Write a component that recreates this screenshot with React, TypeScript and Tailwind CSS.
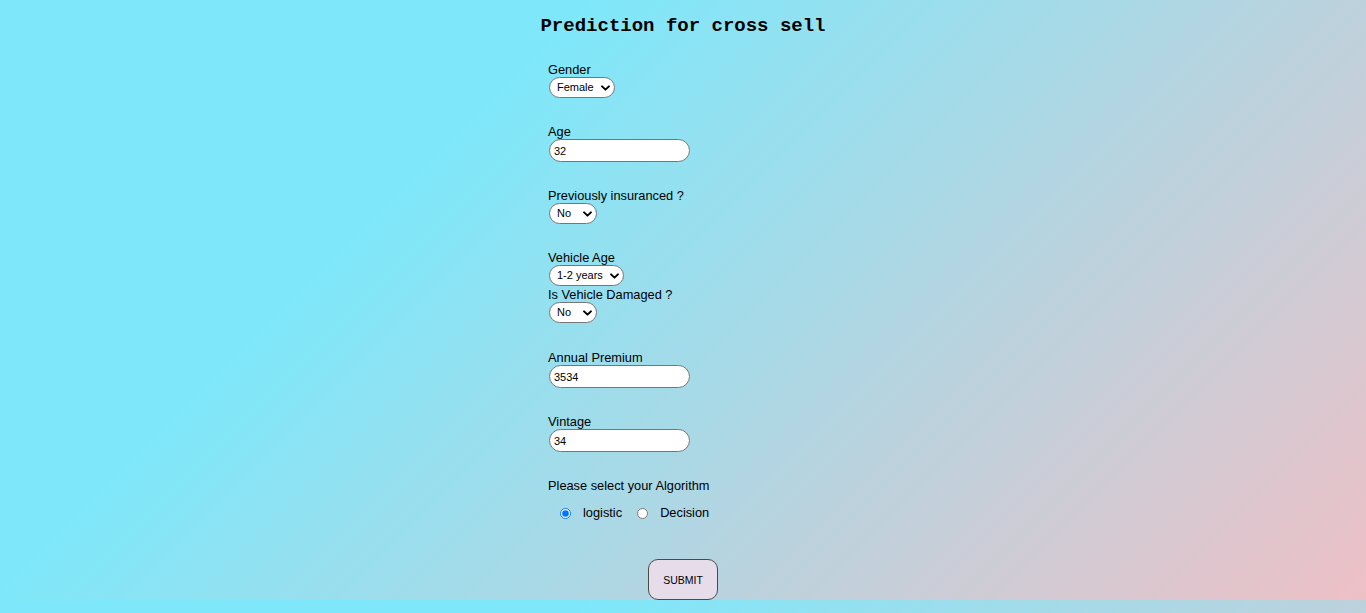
import { useState } from "react";

const Chevron = () => (
  <svg
    viewBox="0 0 10 6"
    className="pointer-events-none absolute right-[5px] top-1/2 -translate-y-1/2 w-[9px] h-[6px]"
    fill="none"
    stroke="#000"
    strokeWidth="2.2"
    strokeLinecap="round"
    strokeLinejoin="round"
  >
    <path d="M1.2 1.2 L5 4.8 L8.8 1.2" />
  </svg>
);

const Select = ({ value, options, width, onChange }: { value: string; options: string[]; width: string; onChange: (v: string) => void }) => (
  <div className={`relative ml-[1px] ${width} h-[21px]`}>
    <select
      value={value}
      onChange={(e) => onChange(e.target.value)}
      className="block appearance-none w-full h-full rounded-full border border-[#767676] bg-white pl-[7px] pr-[16px] text-[11px] leading-[19px] text-black outline-none"
    >
      {options.map((o) => (
        <option key={o} value={o}>{o}</option>
      ))}
    </select>
    <Chevron />
  </div>
);

const TextInput = ({ value, onChange }: { value: string; onChange: (v: string) => void }) => (
  <input
    type="text"
    value={value}
    onChange={(e) => onChange(e.target.value)}
    className="block ml-[1px] w-[141px] h-[23px] rounded-full border border-[#767676] bg-white pl-[4px] text-[11px] text-black outline-none"
  />
);

const Label = ({ children, className = "" }: { children: React.ReactNode; className?: string }) => (
  <label className={`block text-[12.8px] leading-[15px] ${className}`}>{children}</label>
);

export default function App() {
  const [gender, setGender] = useState("Female");
  const [age, setAge] = useState("32");
  const [prev, setPrev] = useState("No");
  const [vehicleAge, setVehicleAge] = useState("1-2 years");
  const [damaged, setDamaged] = useState("No");
  const [premium, setPremium] = useState("3534");
  const [vintage, setVintage] = useState("34");
  const [algo, setAlgo] = useState("logistic");

  return (
    <div className="min-h-[613px] w-full bg-[linear-gradient(135deg,#7ee8fa_30%,#eec0c6_100%)] [background-size:100%_600px] bg-repeat font-['Liberation_Sans',Arial,sans-serif] text-black">
      <div className="h-[600px] flex flex-col items-center">
        {/* title */}
        <h2 className="mt-[15px] font-['Liberation_Mono','Courier_New',monospace] text-[19px] leading-[22px] font-bold">
          Prediction for cross sell
        </h2>

        <form className="w-[270px] flex flex-col items-start" onSubmit={(e) => e.preventDefault()}>
          <Label className="mt-[25px]">Gender</Label>
          <Select value={gender} onChange={setGender} options={["Female", "Male"]} width="w-[66px]" />

          <Label className="mt-[26px]">Age</Label>
          <TextInput value={age} onChange={setAge} />

          <Label className="mt-[26px]">Previously insuranced ?</Label>
          <Select value={prev} onChange={setPrev} options={["No", "Yes"]} width="w-[48px]" />

          <Label className="mt-[26px]">Vehicle Age</Label>
          <Select value={vehicleAge} onChange={setVehicleAge} options={["< 1 year", "1-2 years", "> 2 years"]} width="w-[75px]" />
          <Label className="mt-[1px]">Is Vehicle Damaged ?</Label>
          <Select value={damaged} onChange={setDamaged} options={["No", "Yes"]} width="w-[48px]" />

          <Label className="mt-[27px]">Annual Premium</Label>
          <TextInput value={premium} onChange={setPremium} />

          <Label className="mt-[26px]">Vintage</Label>
          <TextInput value={vintage} onChange={setVintage} />

          <Label className="mt-[26px]">Please select your Algorithm</Label>

          {/* algorithm radios */}
          <div className="mt-[10px] h-[20px] flex items-center text-[12.8px]">
            <input
              type="radio"
              name="algo"
              checked={algo === "logistic"}
              onChange={() => setAlgo("logistic")}
              className="ml-[12px] w-[11px] h-[11px]"
            />
            <span className="ml-[12px]">logistic</span>
            <input
              type="radio"
              name="algo"
              checked={algo === "decision"}
              onChange={() => setAlgo("decision")}
              className="ml-[15px] w-[11px] h-[11px]"
            />
            <span className="ml-[12px]">Decision</span>
          </div>

          <button
            type="submit"
            className="mt-[36px] self-center w-[70px] h-[41px] rounded-[10px] border border-[#4a4a4a] bg-[#e6dcea] text-[10.5px] leading-[13px] pt-[1px] text-black"
          >
            SUBMIT
          </button>
        </form>
      </div>
    </div>
  );
}
